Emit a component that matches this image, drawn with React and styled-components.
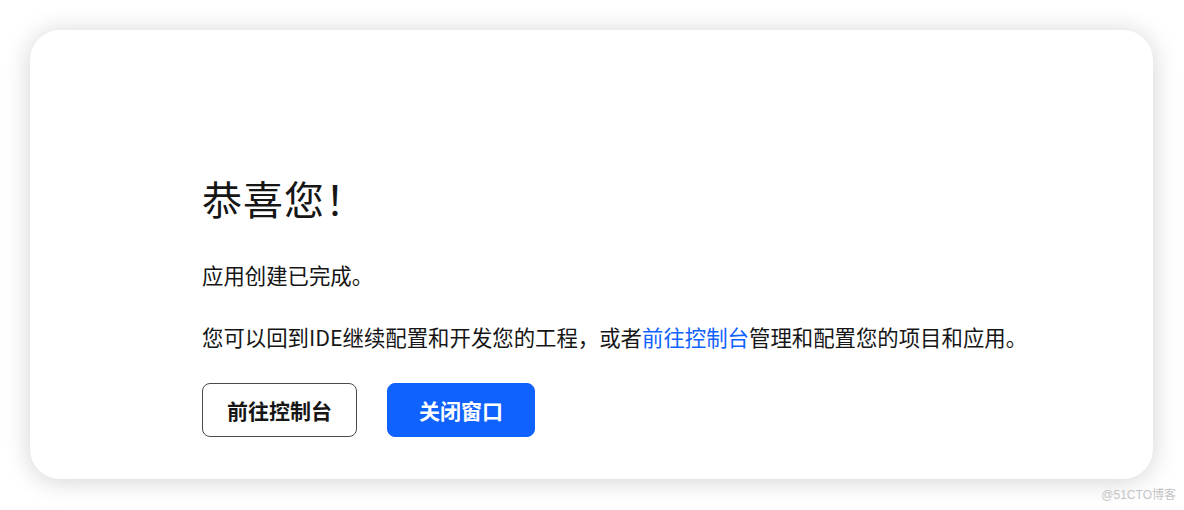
import React from 'react'
import styled, { createGlobalStyle } from 'styled-components'

const GlobalStyle = createGlobalStyle`
  html, body {
    margin: 0;
    padding: 0;
    background: #ffffff;
  }
  body {
    font-family: "Noto Sans CJK SC", "Noto Sans", sans-serif;
    color: #161616;
  }
`;

const Page = styled.div`
  width: 1184px;
  height: 510px;
  box-sizing: border-box;
  padding: 30px 31px 0 30px;
  display: flex;
  flex-direction: column;
`;

const Card = styled.div`
  height: 449px;
  box-sizing: border-box;
  background: #ffffff;
  border-radius: 30px;
  box-shadow: 0 2px 26px rgba(0, 0, 0, 0.18);
  padding: 144px 60px 42px 172px;
  display: flex;
  flex-direction: column;
`;

const Title = styled.h1`
  margin: 0;
  font-size: 40px;
  line-height: 48px;
  font-weight: 400;
  color: #161616;
  letter-spacing: 1px;
`;

const Text = styled.p`
  margin: ${({ $top }) => $top}px 0 0;
  font-size: 21.4px;
  line-height: 32px;
  color: #161616;
  white-space: nowrap;
`;

const Link = styled.a`
  color: #0f62fe;
  text-decoration: none;
  cursor: pointer;
`;

const Actions = styled.div`
  margin-top: 30px;
  display: flex;
  gap: 30px;
`;

const Button = styled.button`
  height: 54px;
  min-width: 148px;
  box-sizing: border-box;
  padding: 0 24px;
  border-radius: 8px;
  font-family: "Noto Sans CJK SC", "Noto Sans", sans-serif;
  font-size: 21px;
  font-weight: 700;
  cursor: pointer;
  border: 1px solid ${({ $primary }) => ($primary ? '#0f62fe' : '#4a4a4a')};
  background: ${({ $primary }) => ($primary ? '#0f62fe' : '#ffffff')};
  color: ${({ $primary }) => ($primary ? '#ffffff' : '#161616')};
`;

const Watermark = styled.div`
  margin-top: 8px;
  margin-right: -23px;
  align-self: flex-end;
  font-family: "Liberation Sans", "Noto Sans CJK SC", sans-serif;
  font-size: 12px;
  line-height: 16px;
  color: #c4c4c4;
`;

export default function App() {
  return (
    <>
      <GlobalStyle />
      <Page>
        <Card>
          <Title>恭喜您！</Title>
          <Text $top={37}>应用创建已完成。</Text>
          <Text $top={30}>
            您可以回到IDE继续配置和开发您的工程，或者<Link>前往控制台</Link>管理和配置您的项目和应用。
          </Text>
          <Actions>
            <Button>前往控制台</Button>
            <Button $primary>关闭窗口</Button>
          </Actions>
        </Card>
        <Watermark>@51CTO博客</Watermark>
      </Page>
    </>
  )
}
